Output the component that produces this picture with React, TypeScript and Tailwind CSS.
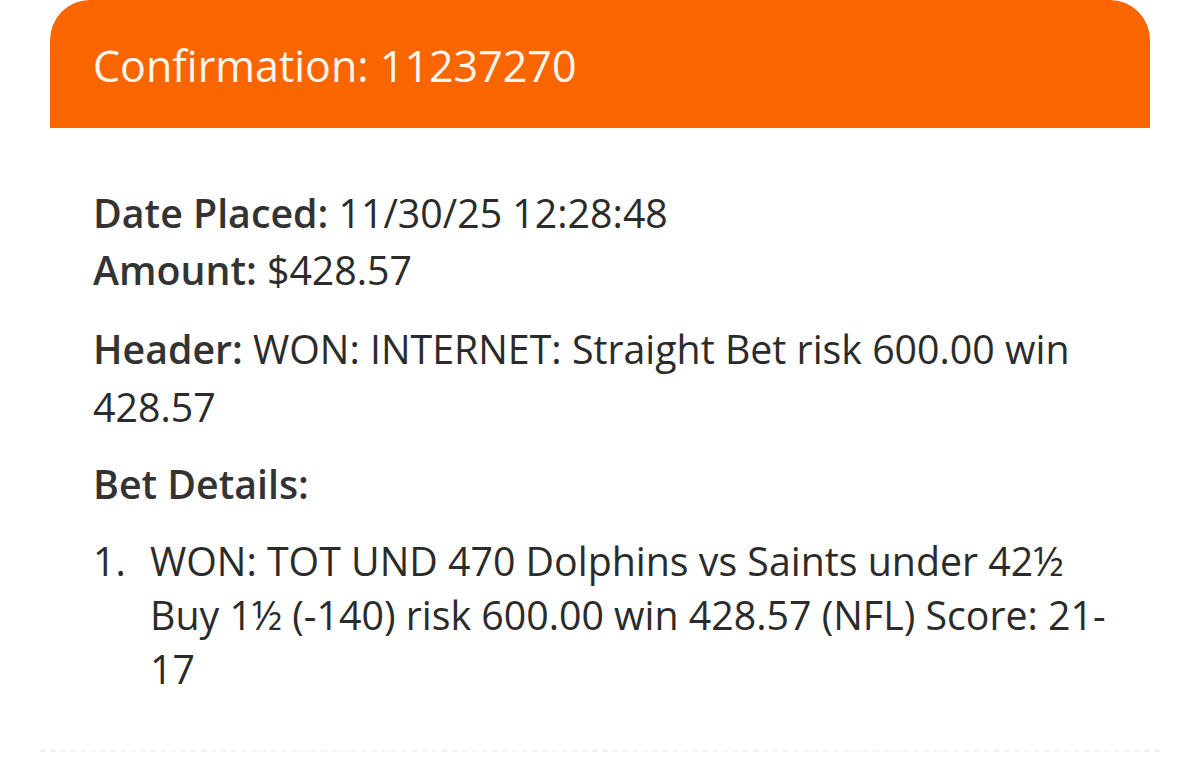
const FIELDS = [
  { label: "Date Placed:", value: "11/30/25 12:28:48" },
  { label: "Amount:", value: "$428.57" },
];

export default function App() {
  return (
    <div
      className="min-h-[775px] w-[1200px] bg-white overflow-hidden"
      style={{ fontFamily: '"Open Sans", "Noto Sans", sans-serif' }}
    >
      <div className="mx-[50px]">
        <div className="h-[128px] rounded-t-[40px] bg-[#f96600] px-[43px] pt-[36px]">
          <h1 className="text-[43px] leading-[60px] font-normal text-[#fdf6f0]">
            Confirmation: 11237270
          </h1>
        </div>

        <div className="px-[43px] pt-[57px] text-[39.3px] text-[#2b2b2b]">
          <div className="leading-[57px]">
            {FIELDS.map((f) => (
              <p key={f.label}>
                <span className="font-semibold text-[#333]">{f.label}</span> {f.value}
              </p>
            ))}
          </div>

          <p className="mt-[21px] leading-[58px]">
            <span className="font-semibold text-[#333]">Header:</span> WON: INTERNET: Straight Bet risk 600.00 win 428.57
          </p>

          <p className="mt-[20px] leading-[57px] font-semibold text-[#333]">Bet Details:</p>

          <ol className="mt-[21px] leading-[54px]">
            <li className="flex">
              <span className="w-[57px] shrink-0">1.</span>
              <span>
                WON: TOT UND 470 Dolphins vs Saints under 42½ Buy 1½ (-140) risk 600.00 win 428.57 (NFL) Score: 21-17
              </span>
            </li>
          </ol>
        </div>
      </div>
      <div className="mx-[40px] mt-[54px] border-t-2 border-dashed border-[#f4f4f4]" />
    </div>
  );
}
